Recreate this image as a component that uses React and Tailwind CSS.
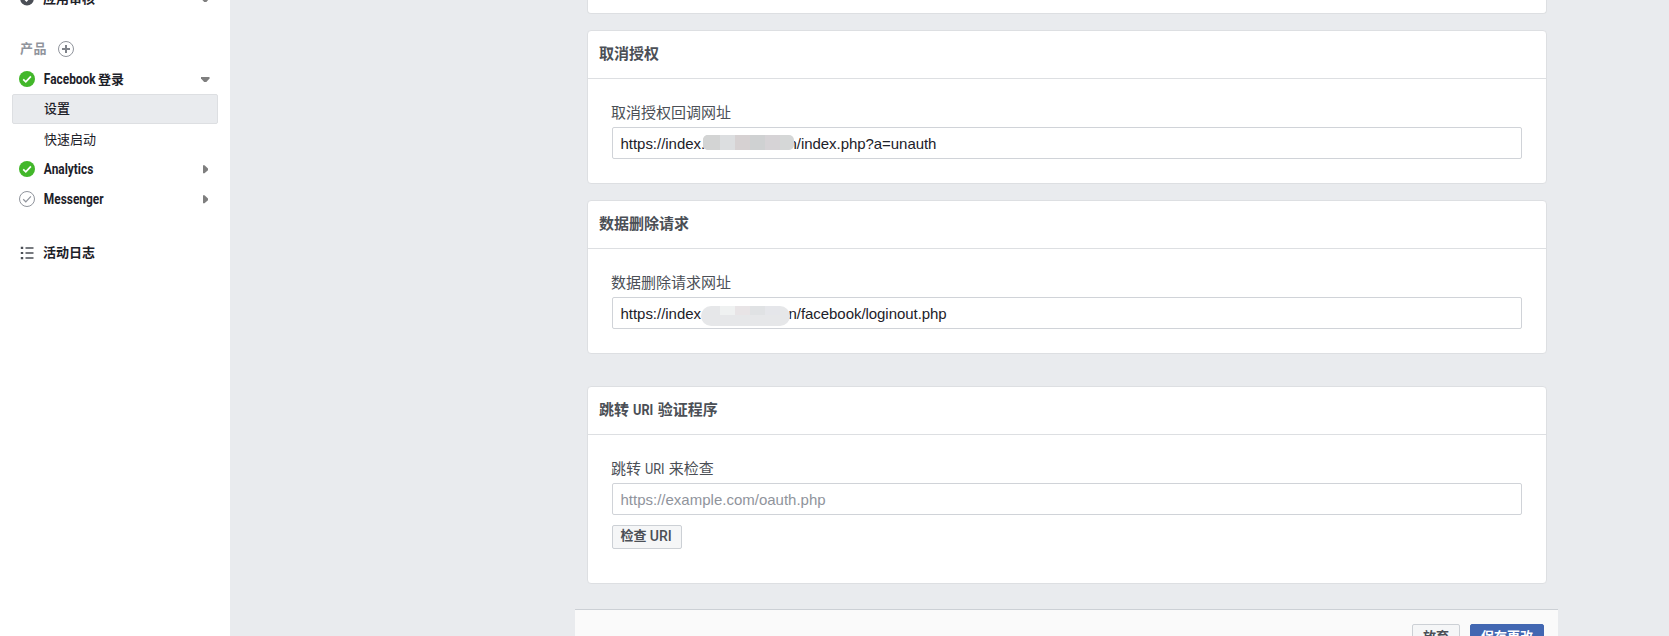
import React from 'react';

function CheckBadge({ muted = false }) {
  return (
    <svg width="16" height="16" viewBox="0 0 16 16" className="shrink-0">
      {muted ? (
        <circle cx="8" cy="8" r="7.5" fill="none" stroke="#90949c" />
      ) : (
        <circle cx="8" cy="8" r="8" fill="#42b72a" />
      )}
      <path
        d="M4.2 8.3 L6.8 10.8 L11.9 5.3"
        fill="none"
        stroke={muted ? '#90949c' : '#fff'}
        strokeWidth={muted ? 1.2 : 1.7}
      />
    </svg>
  );
}

function Caret({ open = false }) {
  return (
    <svg width="9" height="9" viewBox="0 0 9 9" className="shrink-0">
      <path d={open ? 'M0 2H8.5V3.5L5.4 7H3.2L0 3.5Z' : 'M2 0.3H3.5L7 3.4V5.2L3.5 8.3H2Z'} fill="#7f7f7f" />
    </svg>
  );
}

function NavRow({ icon, open, hasCaret = true, children }) {
  return (
    <div className="flex h-[30px] items-center pl-[19px] pr-[20px]">
      {icon}
      <div className="ml-[8px] flex-1 whitespace-pre text-[13px] font-bold leading-[18px] text-[#1d2129]">{children}</div>
      {hasCaret && <Caret open={open} />}
    </div>
  );
}

function Condensed({ width, className = '', children }) {
  return (
    <span className={`inline-flex ${width}`}>
      <span className={`origin-left whitespace-pre scale-x-[0.85] ${className}`}>{children}</span>
    </span>
  );
}

function Sidebar() {
  return (
    <aside className="w-[230px] shrink-0 bg-white">
      <div className="-mt-[16px]">
        <NavRow
          open
          icon={
            <svg width="16" height="16" viewBox="0 0 16 16" className="shrink-0">
              <circle cx="8" cy="7.8" r="6.8" fill="#4b4f56" />
              <path d="M5.5 8l2 2 3.5-4" fill="none" stroke="#fff" strokeWidth="1.4" />
            </svg>
          }
        >
          应用审核
        </NavRow>
      </div>
      <div className="mt-[20px] flex h-[30px] items-center pl-[20px] text-[13px] font-bold text-[#90949c]">
        <span className="w-[38px] tracking-[0.5px]">产品</span>
        <svg width="16" height="16" viewBox="0 0 16 16">
          <circle cx="8" cy="8" r="7.5" fill="none" stroke="#90949c" />
          <path d="M8 4v8M4 8h8" stroke="#7f838a" strokeWidth="2" />
        </svg>
      </div>
      <NavRow icon={<CheckBadge />} open>
        <Condensed width="w-[55px]" className="pl-[1px] text-[14px]">Facebook</Condensed>登录
      </NavRow>
      <div className="ml-[12px] flex h-[30px] w-[206px] items-center rounded-[2px] border border-[#dddfe2] bg-[#e9ebee] pl-[31px] text-[13px] font-medium text-[#1d2129]">
        设置
      </div>
      <div className="flex h-[30px] items-center pl-[44px] pt-[1px] text-[13px] text-[#1d2129]">快速启动</div>
      <NavRow icon={<CheckBadge />}>
        <Condensed width="w-[54px]" className="pl-[1px] pt-[1px] text-[14px]">Analytics</Condensed>
      </NavRow>
      <NavRow icon={<CheckBadge muted />}>
        <Condensed width="w-[62px]" className="pl-[1px] pt-[1px] text-[14px]">Messenger</Condensed>
      </NavRow>
      <div className="mt-[24px]">
        <NavRow
          hasCaret={false}
          icon={
            <svg width="16" height="16" viewBox="0 0 16 16" className="shrink-0">
              <path d="M1.8 2.8h2.4M1.8 8h2.4M1.8 13.2h2.4" stroke="#4b4f56" strokeWidth="2.2" />
              <path d="M6.5 3h8M6.5 8h8M6.5 13h8" stroke="#4b4f56" strokeWidth="1.3" />
            </svg>
          }
        >
          活动日志
        </NavRow>
      </div>
    </aside>
  );
}

function Card({ title, label, className, children }) {
  return (
    <section className={`w-[960px] rounded-[4px] border border-[#dddfe2] bg-white ${className}`}>
      <h2 className="flex h-[48px] items-center whitespace-pre border-b border-[#dddfe2] pb-[1px] pl-[11px] text-[15px] font-bold text-[#4b4f56]">
        {title}
      </h2>
      <div className="pl-[24px] pr-[24px] pt-[24px]">
        <div className="-ml-[1px] flex h-[24px] items-center whitespace-pre pb-[4px] text-[15px] text-[#4b4f56]">{label}</div>
        {children}
      </div>
    </section>
  );
}

const inputBox =
  "flex h-[32px] w-[910px] items-center whitespace-pre rounded-[2px] border border-[#d0d3d8] bg-white pl-[7.5px] pt-[2px] font-['Liberation_Sans',Arial,sans-serif] text-[15px] leading-[18px] text-[#1d2129]";

function Field({ before, beforeWidth, mask, after }) {
  return (
    <div className={`${inputBox} relative`}>
      <span className={`shrink-0 overflow-visible tracking-[-0.03px] ${beforeWidth}`}>{before}</span>
      <span className="tracking-[-0.05px]">{after}</span>
      {mask}
    </div>
  );
}

function Main() {
  return (
    <main className="flex flex-1 flex-col pl-[345px]">
      <div className="ml-[12px] h-[14px] w-[960px] shrink-0 rounded-b-[4px] border border-t-0 border-[#dddfe2] bg-white" />
      <div className="flex flex-col pl-[12px]">
        <Card title="取消授权" label="取消授权回调网址" className="mt-[16px] h-[154px]">
          <Field
            before="https://index."
            beforeWidth="w-[168px]"
            after="n/index.php?a=unauth"
            mask={
              <div className="absolute left-[90px] top-[7px] flex h-[15px] w-[91px] overflow-hidden rounded-[5px] bg-[#d5d7d7]">
                <i className="w-[17px] bg-[#d3d4d4]" />
                <i className="w-[15px] bg-[#dcdee0]" />
                <i className="w-[15px] bg-[#d6d1d2]" />
                <i className="w-[15px] bg-[#cfd1d2]" />
                <i className="w-[15px] bg-[#d6d3d6]" />
              </div>
            }
          />
        </Card>
        <Card title="数据删除请求" label="数据删除请求网址" className="mt-[16px] h-[154px]">
          <Field
            before="https://index"
            beforeWidth="w-[168px]"
            after="n/facebook/loginout.php"
            mask={
              <div className="absolute left-[88px] top-[8px] flex h-[20px] w-[89px] overflow-hidden rounded-[10px] bg-[#e6e7e9]">
                <i className="ml-[19px] h-[9px] w-[15px] bg-[#eff1f1]" />
                <i className="h-[9px] w-[15px] bg-[#e8e4e6]" />
                <i className="h-[9px] w-[15px] bg-[#e0e2e4]" />
                <i className="h-[9px] w-[15px] bg-[#e5e6ea]" />
              </div>
            }
          />
        </Card>
        <Card
          title={<>跳转 <Condensed width="w-[25px]">URI</Condensed>验证程序</>}
          label={<>跳转 <Condensed width="w-[24px]">URI</Condensed>来检查</>}
          className="mt-[32px] h-[198px]"
        >
          <div className={inputBox}>
            <span className="text-[#90949c]">https://example.com/oauth.php</span>
          </div>
          <button className="mt-[10px] flex h-[24px] w-[70px] items-center whitespace-pre rounded-[2px] border border-[#ccd0d5] bg-[#f5f6f7] pb-[2px] pl-[7.5px] text-[13px] font-bold text-[#4b4f56]">
            检查 <span className="text-[14px] font-medium">URI</span>
          </button>
        </Card>
      </div>
      <footer className="mt-[25px] flex h-[60px] w-[983px] shrink-0 items-start justify-end gap-[10px] border-t border-[#ccd0d5] bg-[#fafafa] pr-[14px] pt-[14px] text-[13px] font-bold leading-[24px]">
        <button className="h-[26px] w-[48px] rounded-[2px] border border-[#ccd0d5] bg-[#f5f6f7] text-[#4b4f56]">放弃</button>
        <button className="h-[26px] w-[74px] rounded-[2px] border border-[#4267b2] bg-[#4267b2] text-white">保存更改</button>
      </footer>
    </main>
  );
}

export default function App() {
  return (
    <div className="flex h-[636px] w-[1669px] overflow-hidden bg-[#e9ebee] font-['Roboto','Noto_Sans_CJK_SC',sans-serif]">
      <Sidebar />
      <Main />
    </div>
  );
}
